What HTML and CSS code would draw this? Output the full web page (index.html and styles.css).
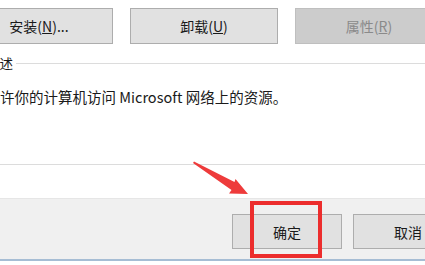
FILE: index.html
```html
<!DOCTYPE html>
<html lang="zh-CN">
<head>
<meta charset="UTF-8">
<title>属性</title>
<link rel="stylesheet" href="styles.css">
</head>
<body>

<div class="dialog">
    <div class="content">
        <div class="btn-row">
            <button class="btn">安装(<u>N</u>)...</button>
            <button class="btn">卸载(<u>U</u>)</button>
            <button class="btn" disabled>属性(<u>R</u>)</button>
        </div>
        <div class="group">
            <div class="group-title">
                <span class="group-label">描述</span>
                <span class="group-line"></span>
            </div>
            <p class="desc">允许你的计算机访问 Microsoft 网络上的资源。</p>
        </div>
    </div>
    <div class="footer">
        <div class="ok-wrap">
            <button class="btn btn-footer">确定</button>
            <span class="highlight"></span>
        </div>
        <button class="btn btn-footer">取消</button>
    </div>
    <svg class="arrow" width="70" height="45" viewBox="0 0 70 45">
        <polygon points="0,5 1,3.5 41.5,24 42.5,21 55,36 36,35.5 38.5,32" fill="#ee3b3b"/>
    </svg>
</div>

</body>
</html>
```

FILE: styles.css
```css
/* Global styles */
body {
    font-family: "Noto Sans CJK SC", "Noto Sans", sans-serif;
    margin: 0;
    padding: 0;
    background-color: #fff;
    color: #1a1a1a;
}
.dialog {
    position: relative;
    width: 425px;
    height: 265px;
    overflow: hidden;
}
.content {
    height: 198px;
    background-color: #fff;
}
.btn-row {
    display: flex;
    gap: 17px;
    margin-left: -35px;
    padding-top: 8px;
}
.btn {
    font-family: inherit;
    font-size: 14px;
    color: #1a1a1a;
    background-color: #e1e1e1;
    border: 1px solid #adadad;
    padding: 0;
    height: 36px;
    width: 148px;
    flex-shrink: 0;
}
.btn:disabled {
    background-color: #cccccc;
    border-color: #bfbfbf;
    color: #8a8a8a;
}
.group {
    margin-top: 11px;
    margin-left: -14px;
    height: 109px;
    border-bottom: 1px solid #dcdcdc;
}
.group-title {
    display: flex;
    align-items: center;
    height: 16px;
    font-size: 13.5px;
}
.group-label {
    padding-right: 3px;
}
.group-line {
    flex: 1;
    border-top: 1px solid #dcdcdc;
}
.desc {
    margin: 16px 0 0 -0.5px;
    font-size: 14.5px;
    line-height: 20px;
}
.footer {
    display: flex;
    gap: 11px;
    height: 63px;
    padding-left: 232px;
    padding-top: 15px;
    box-sizing: border-box;
    background-color: #f0f0f0;
    border-top: 1px solid #e6e6e6;
    border-bottom: 2px solid #a6bdd4;
}
.btn-footer {
    width: 110px;
    height: 35px;
}
.ok-wrap {
    position: relative;
}
.highlight {
    position: absolute;
    left: 18px;
    top: -13px;
    width: 72px;
    height: 57px;
    box-sizing: border-box;
    border: 4px solid #ec2d2d;
}
.arrow {
    position: absolute;
    left: 193px;
    top: 158px;
}
```
